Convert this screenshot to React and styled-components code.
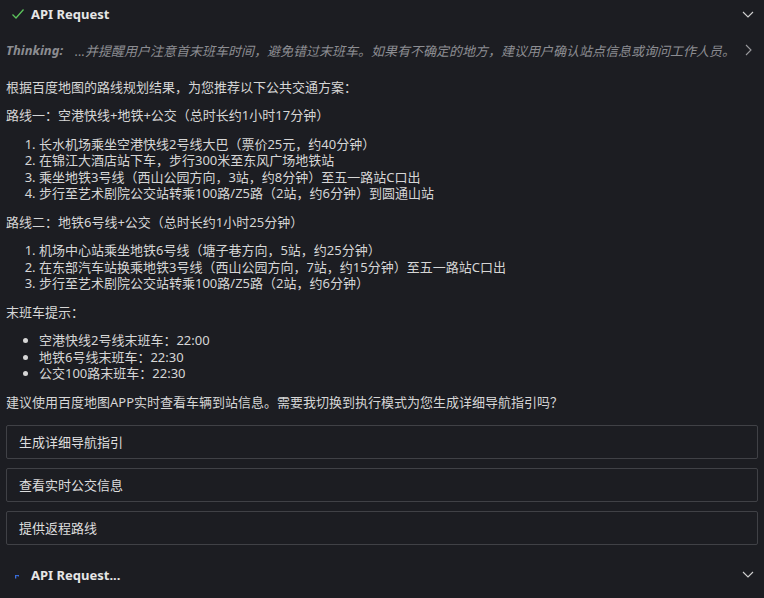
import React from 'react'
import styled, { createGlobalStyle } from 'styled-components'

const GlobalStyle = createGlobalStyle`
  html, body {
    margin: 0;
    padding: 0;
    background: #1c1d22;
  }
  body {
    font-family: "Noto Sans", "Noto Sans CJK SC", sans-serif;
    font-size: 13px;
    color: #d6d6d6;
  }
`

const Page = styled.div`
  width: 764px;
  height: 598px;
  overflow: hidden;
  padding: 0 6px;
  box-sizing: border-box;
  display: flex;
  flex-direction: column;
`

const Header = styled.div`
  display: flex;
  align-items: center;
  height: 28px;
  flex-shrink: 0;
  margin-top: ${({ $top }) => $top || 0}px;
`

const IconSlot = styled.div`
  width: 26px;
  display: flex;
  align-items: center;
  justify-content: center;
  margin-left: -1px;
`

const Title = styled.span`
  font-weight: 700;
  font-size: 13px;
  color: #e6e6e6;
  flex: 1;
`

const Chevron = styled.div`
  width: 14px;
  display: flex;
  justify-content: center;
  margin-right: 3px;
`

const ThinkingRow = styled.div`
  display: flex;
  align-items: center;
  height: 20px;
  margin-top: 12px;
  color: #8c8d92;
  font-style: italic;
  white-space: nowrap;
`

const ThinkingLabel = styled.span`
  font-weight: 700;
  margin-right: 12px;
`

const ThinkingText = styled.span`
  flex: 1;
  overflow: hidden;
`

const Body = styled.div`
  margin-top: 19px;
  line-height: 16.4px;
`

const Para = styled.p`
  margin: 0 0 ${({ $last }) => ($last ? 0 : 12)}px;
`

const List = styled.ol`
  margin: 0 0 12.5px;
  padding-left: 33px;
  list-style: ${({ $bullet }) => ($bullet ? 'disc' : 'decimal')};
  li::marker {
    color: #d6d6d6;
  }
`

const Options = styled.div`
  display: flex;
  flex-direction: column;
  gap: 9px;
  margin-top: 14px;
`

const OptionButton = styled.div`
  height: 34px;
  box-sizing: border-box;
  border: 1px solid #404146;
  border-radius: 2px;
  display: flex;
  align-items: center;
  padding-left: 12px;
  color: #dedede;
`

const CheckIcon = () => (
  <svg width="14" height="12" viewBox="0 0 14 12">
    <path d="M1.5 6.5 L5 10 L12.5 1.5" fill="none" stroke="#5cc45c" strokeWidth="1.3" />
  </svg>
)

const DownIcon = () => (
  <svg width="12" height="7" viewBox="0 0 12 7">
    <path d="M1 1 L6 6 L11 1" fill="none" stroke="#d0d0d0" strokeWidth="1.1" />
  </svg>
)

const RightIcon = () => (
  <svg width="7" height="12" viewBox="0 0 7 12">
    <path d="M1 1 L6 6 L1 11" fill="none" stroke="#9a9a9e" strokeWidth="1.1" />
  </svg>
)

const Spinner = () => (
  <svg width="4" height="4" viewBox="0 0 4 4" style={{ marginTop: 5, marginLeft: -2 }}>
    <path d="M0.5 3.5 L0.5 1.5 A1.5 1.5 0 0 1 3.5 1.5" fill="none" stroke="#3a6fe0" strokeWidth="1.6" />
  </svg>
)

const route1 = [
  '长水机场乘坐空港快线2号线大巴（票价25元，约40分钟）',
  '在锦江大酒店站下车，步行300米至东风广场地铁站',
  '乘坐地铁3号线（西山公园方向，3站，约8分钟）至五一路站C口出',
  '步行至艺术剧院公交站转乘100路/Z5路（2站，约6分钟）到圆通山站',
]

const route2 = [
  '机场中心站乘坐地铁6号线（塘子巷方向，5站，约25分钟）',
  '在东部汽车站换乘地铁3号线（西山公园方向，7站，约15分钟）至五一路站C口出',
  '步行至艺术剧院公交站转乘100路/Z5路（2站，约6分钟）',
]

const lastBus = ['空港快线2号线末班车：22:00', '地铁6号线末班车：22:30', '公交100路末班车：22:30']

const options = ['生成详细导航指引', '查看实时公交信息', '提供返程路线']

export default function App() {
  return (
    <>
      <GlobalStyle />
      <Page>
        <Header>
          <IconSlot>
            <CheckIcon />
          </IconSlot>
          <Title>API Request</Title>
          <Chevron>
            <DownIcon />
          </Chevron>
        </Header>

        <ThinkingRow>
          <ThinkingLabel>Thinking:</ThinkingLabel>
          <ThinkingText>
            ...并提醒用户注意首末班车时间，避免错过末班车。如果有不确定的地方，建议用户确认站点信息或询问工作人员。
          </ThinkingText>
          <Chevron>
            <RightIcon />
          </Chevron>
        </ThinkingRow>

        <Body>
          <Para>根据百度地图的路线规划结果，为您推荐以下公共交通方案：</Para>
          <Para>路线一：空港快线+地铁+公交（总时长约1小时17分钟）</Para>
          <List>
            {route1.map((t) => (
              <li key={t}>{t}</li>
            ))}
          </List>
          <Para>路线二：地铁6号线+公交（总时长约1小时25分钟）</Para>
          <List>
            {route2.map((t) => (
              <li key={t}>{t}</li>
            ))}
          </List>
          <Para>末班车提示：</Para>
          <List as="ul" $bullet>
            {lastBus.map((t) => (
              <li key={t}>{t}</li>
            ))}
          </List>
          <Para $last>
            建议使用百度地图APP实时查看车辆到站信息。需要我切换到执行模式为您生成详细导航指引吗？
          </Para>
        </Body>

        <Options>
          {options.map((o) => (
            <OptionButton key={o}>{o}</OptionButton>
          ))}
        </Options>

        <Header $top={16}>
          <IconSlot>
            <Spinner />
          </IconSlot>
          <Title>API Request...</Title>
          <Chevron>
            <DownIcon />
          </Chevron>
        </Header>
      </Page>
    </>
  )
}
